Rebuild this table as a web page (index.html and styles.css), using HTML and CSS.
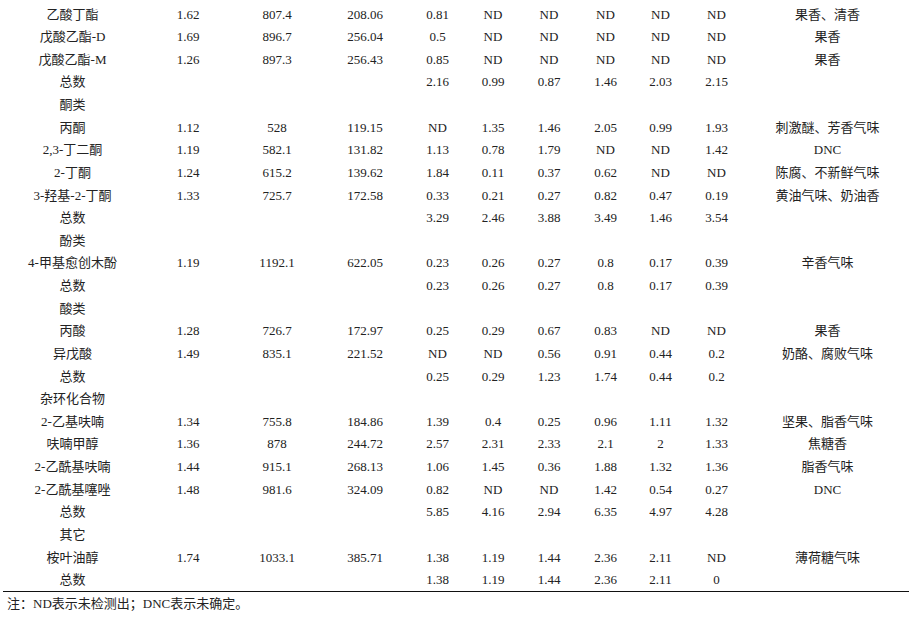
FILE: index.html
```html
<!DOCTYPE html>
<html lang="zh">
<head>
<meta charset="utf-8">
<title>挥发性风味物质</title>
<link rel="stylesheet" href="styles.css">
</head>
<body>
<table class="data">
<colgroup>
<col class="c-name"><col class="c2"><col class="c3"><col class="c4"><col class="c5"><col class="c6"><col class="c7"><col class="c8"><col class="c9"><col class="c10"><col class="c11">
</colgroup>
<tbody>
<tr><td>乙酸丁酯</td><td>1.62</td><td>807.4</td><td>208.06</td><td>0.81</td><td>ND</td><td>ND</td><td>ND</td><td>ND</td><td>ND</td><td>果香、清香</td></tr>
<tr><td>戊酸乙酯-D</td><td>1.69</td><td>896.7</td><td>256.04</td><td>0.5</td><td>ND</td><td>ND</td><td>ND</td><td>ND</td><td>ND</td><td>果香</td></tr>
<tr><td>戊酸乙酯-M</td><td>1.26</td><td>897.3</td><td>256.43</td><td>0.85</td><td>ND</td><td>ND</td><td>ND</td><td>ND</td><td>ND</td><td>果香</td></tr>
<tr><td>总数</td><td></td><td></td><td></td><td>2.16</td><td>0.99</td><td>0.87</td><td>1.46</td><td>2.03</td><td>2.15</td><td></td></tr>
<tr><td>酮类</td><td></td><td></td><td></td><td></td><td></td><td></td><td></td><td></td><td></td><td></td></tr>
<tr><td>丙酮</td><td>1.12</td><td>528</td><td>119.15</td><td>ND</td><td>1.35</td><td>1.46</td><td>2.05</td><td>0.99</td><td>1.93</td><td>刺激醚、芳香气味</td></tr>
<tr><td>2,3-丁二酮</td><td>1.19</td><td>582.1</td><td>131.82</td><td>1.13</td><td>0.78</td><td>1.79</td><td>ND</td><td>ND</td><td>1.42</td><td>DNC</td></tr>
<tr><td>2-丁酮</td><td>1.24</td><td>615.2</td><td>139.62</td><td>1.84</td><td>0.11</td><td>0.37</td><td>0.62</td><td>ND</td><td>ND</td><td>陈腐、不新鲜气味</td></tr>
<tr><td>3-羟基-2-丁酮</td><td>1.33</td><td>725.7</td><td>172.58</td><td>0.33</td><td>0.21</td><td>0.27</td><td>0.82</td><td>0.47</td><td>0.19</td><td>黄油气味、奶油香</td></tr>
<tr><td>总数</td><td></td><td></td><td></td><td>3.29</td><td>2.46</td><td>3.88</td><td>3.49</td><td>1.46</td><td>3.54</td><td></td></tr>
<tr><td>酚类</td><td></td><td></td><td></td><td></td><td></td><td></td><td></td><td></td><td></td><td></td></tr>
<tr><td>4-甲基愈创木酚</td><td>1.19</td><td>1192.1</td><td>622.05</td><td>0.23</td><td>0.26</td><td>0.27</td><td>0.8</td><td>0.17</td><td>0.39</td><td>辛香气味</td></tr>
<tr><td>总数</td><td></td><td></td><td></td><td>0.23</td><td>0.26</td><td>0.27</td><td>0.8</td><td>0.17</td><td>0.39</td><td></td></tr>
<tr><td>酸类</td><td></td><td></td><td></td><td></td><td></td><td></td><td></td><td></td><td></td><td></td></tr>
<tr><td>丙酸</td><td>1.28</td><td>726.7</td><td>172.97</td><td>0.25</td><td>0.29</td><td>0.67</td><td>0.83</td><td>ND</td><td>ND</td><td>果香</td></tr>
<tr><td>异戊酸</td><td>1.49</td><td>835.1</td><td>221.52</td><td>ND</td><td>ND</td><td>0.56</td><td>0.91</td><td>0.44</td><td>0.2</td><td>奶酪、腐败气味</td></tr>
<tr><td>总数</td><td></td><td></td><td></td><td>0.25</td><td>0.29</td><td>1.23</td><td>1.74</td><td>0.44</td><td>0.2</td><td></td></tr>
<tr><td>杂环化合物</td><td></td><td></td><td></td><td></td><td></td><td></td><td></td><td></td><td></td><td></td></tr>
<tr><td>2-乙基呋喃</td><td>1.34</td><td>755.8</td><td>184.86</td><td>1.39</td><td>0.4</td><td>0.25</td><td>0.96</td><td>1.11</td><td>1.32</td><td>坚果、脂香气味</td></tr>
<tr><td>呋喃甲醇</td><td>1.36</td><td>878</td><td>244.72</td><td>2.57</td><td>2.31</td><td>2.33</td><td>2.1</td><td>2</td><td>1.33</td><td>焦糖香</td></tr>
<tr><td>2-乙酰基呋喃</td><td>1.44</td><td>915.1</td><td>268.13</td><td>1.06</td><td>1.45</td><td>0.36</td><td>1.88</td><td>1.32</td><td>1.36</td><td>脂香气味</td></tr>
<tr><td>2-乙酰基噻唑</td><td>1.48</td><td>981.6</td><td>324.09</td><td>0.82</td><td>ND</td><td>ND</td><td>1.42</td><td>0.54</td><td>0.27</td><td>DNC</td></tr>
<tr><td>总数</td><td></td><td></td><td></td><td>5.85</td><td>4.16</td><td>2.94</td><td>6.35</td><td>4.97</td><td>4.28</td><td></td></tr>
<tr><td>其它</td><td></td><td></td><td></td><td></td><td></td><td></td><td></td><td></td><td></td><td></td></tr>
<tr><td>桉叶油醇</td><td>1.74</td><td>1033.1</td><td>385.71</td><td>1.38</td><td>1.19</td><td>1.44</td><td>2.36</td><td>2.11</td><td>ND</td><td>薄荷糖气味</td></tr>
<tr><td>总数</td><td></td><td></td><td></td><td>1.38</td><td>1.19</td><td>1.44</td><td>2.36</td><td>2.11</td><td>0</td><td></td></tr>
</tbody>
</table>
<p class="note">注：ND表示未检测出；DNC表示未确定。</p>
</body>
</html>
```

FILE: styles.css
```css
html, body {
  margin: 0;
  background: #ffffff;
}
body {
  padding: 2.7px 0 0 3px;
  font-family: "Liberation Serif", "Noto Sans CJK SC", serif;
  font-size: 13px;
  color: #222222;
}
.data {
  table-layout: fixed;
  border-collapse: collapse;
  width: 906px;
  border-bottom: 1px solid #111111;
}
.c-name { width: 139px; }
.c2 { width: 92px; }
.c3 { width: 86px; }
.c4 { width: 90px; }
.c5 { width: 55px; }
.c6 { width: 56px; }
.c7 { width: 56px; }
.c8 { width: 57px; }
.c9 { width: 53px; }
.c10 { width: 59px; }
.c11 { width: 163px; }
.data td {
  height: 22.64px;
  padding: 0;
  text-align: center;
  vertical-align: middle;
  line-height: 15px;
  white-space: nowrap;
}
.note {
  margin: 4px 0 0 4px;
  line-height: 15px;
}
```
